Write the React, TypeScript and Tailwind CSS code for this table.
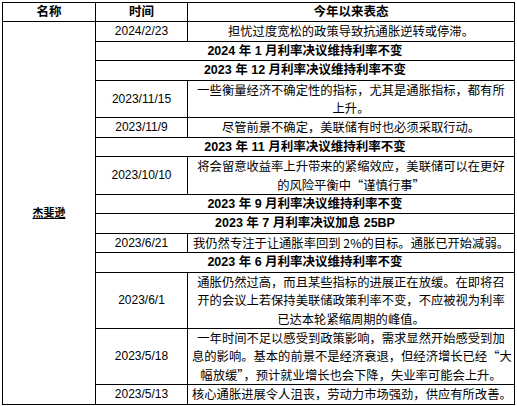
import React from 'react';

type Row =
    | { kind: 'note'; date: string; lines: string[] }
    | { kind: 'decision'; text: React.ReactNode };

const rows: Row[] = [
    { kind: 'note', date: '2024/2/23', lines: ['担忧过度宽松的政策导致抗通胀逆转或停滞。'] },
    { kind: 'decision', text: '2024 年 1 月利率决议维持利率不变' },
    { kind: 'decision', text: '2023 年 12 月利率决议维持利率不变' },
    {
        kind: 'note',
        date: '2023/11/15',
        lines: ['一些衡量经济不确定性的指标，尤其是通胀指标，都有所', '上升。'],
    },
    { kind: 'note', date: '2023/11/9', lines: ['尽管前景不确定，美联储有时也必须采取行动。'] },
    { kind: 'decision', text: '2023 年 11 月利率决议维持利率不变' },
    {
        kind: 'note',
        date: '2023/10/10',
        lines: ['将会留意收益率上升带来的紧缩效应，美联储可以在更好', '的风险平衡中“谨慎行事”'],
    },
    { kind: 'decision', text: '2023 年 9 月利率决议维持利率不变' },
    { kind: 'decision', text: '2023 年 7 月利率决议加息 25BP' },
    { kind: 'note', date: '2023/6/21', lines: ['我仍然专注于让通胀率回到 2%的目标。通胀已开始减弱。'] },
    { kind: 'decision', text: '2023 年 6 月利率决议维持利率不变' },
    {
        kind: 'note',
        date: '2023/6/1',
        lines: [
            '通胀仍然过高，而且某些指标的进展正在放缓。在即将召',
            '开的会议上若保持美联储政策利率不变，不应被视为利率',
            '已达本轮紧缩周期的峰值。',
        ],
    },
    {
        kind: 'note',
        date: '2023/5/18',
        lines: [
            '一年时间不足以感受到政策影响，需求显然开始感受到加',
            '息的影响。基本的前景不是经济衰退，但经济增长已经“大',
            '幅放缓”，预计就业增长也会下降，失业率可能会上升。',
        ],
    },
    { kind: 'note', date: '2023/5/13', lines: ['核心通胀进展令人沮丧，劳动力市场强劲，供应有所改善。'] },
];

const cell = 'border border-black p-0 align-middle text-center';

export default function App() {
    return (
        <div className="min-h-[406px] w-[517px] bg-white pl-[2px] pt-[2px] text-black">
            <table
                className="w-[512px] table-fixed border-collapse text-[12.5px] leading-[18.4px]"
                style={{ fontFamily: '"Liberation Sans", "Noto Sans CJK SC", sans-serif' }}
            >
                <colgroup>
                    <col className="w-[93px]" />
                    <col className="w-[92px]" />
                    <col className="w-[327px]" />
                </colgroup>
                <thead>
                    <tr className="font-bold">
                        <th className={cell}>名称</th>
                        <th className={cell}>时间</th>
                        <th className={cell}>今年以来表态</th>
                    </tr>
                </thead>
                <tbody>
                    {rows.map((r, i) => (
                        <tr key={i}>
                            {i === 0 && (
                                <td rowSpan={rows.length} className={cell}>
                                    <span className="text-[11px] font-bold underline">杰斐逊</span>
                                </td>
                            )}
                            {r.kind === 'note' ? (
                                <>
                                    <td className={`${cell} text-[12px]`}>{r.date}</td>
                                    <td
                                        className={`${cell} px-[4px] text-[12.3px]`}
                                        style={{ fontFamily: '"Noto Sans CJK SC", "Liberation Sans", sans-serif' }}
                                    >
                                        {r.lines.map((l, j) => (
                                            <div key={j} className="whitespace-nowrap">{l}</div>
                                        ))}
                                    </td>
                                </>
                            ) : (
                                <td colSpan={2} className={`${cell} whitespace-nowrap font-bold`}>
                                    {r.text}
                                </td>
                            )}
                        </tr>
                    ))}
                </tbody>
            </table>
        </div>
    );
}
